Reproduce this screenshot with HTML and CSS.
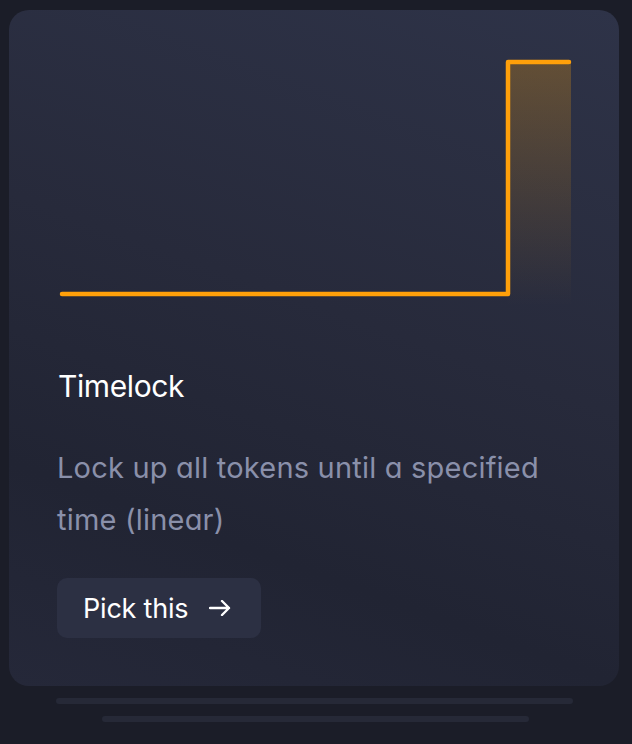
FILE: index.html
```html
<!DOCTYPE html>
<html>
<head>
<meta charset="utf-8">
<link rel="stylesheet" href="styles.css">
</head>
<body>
<div class="stack">
  <div class="card">
    <svg class="chart" width="514" height="250" viewBox="0 0 514 250">
      <defs>
        <linearGradient id="fillg" x1="0" y1="0" x2="0" y2="1">
          <stop offset="0" stop-color="#f59e0b" stop-opacity="0.27"/>
          <stop offset="1" stop-color="#f59e0b" stop-opacity="0"/>
        </linearGradient>
      </defs>
      <rect x="449" y="4" width="63" height="244" fill="url(#fillg)"/>
      <polyline points="3,236 449,236 449,4 510,4" fill="none" stroke="#ffa00a" stroke-width="4.5" stroke-linecap="round" stroke-linejoin="round"/>
    </svg>
    <h2 class="title">Timelock</h2>
    <p class="desc">Lock up all tokens until a specified time (linear)</p>
    <button class="pick">Pick this
      <svg class="arrow" width="22" height="16" viewBox="0 0 22 16"><path d="M1 8H20M13 1L20 8L13 15" fill="none" stroke="#fff" stroke-width="2.4" stroke-linecap="round" stroke-linejoin="round"/></svg>
    </button>
  </div>
  <div class="bar bar1"></div>
  <div class="bar bar2"></div>
</div>
</body>
</html>
```
FILE: styles.css
```css
html, body {
  margin: 0;
  padding: 0;
  background: #1b1d28;
  width: 632px;
  height: 744px;
  overflow: hidden;
}
body {
  font-family: Inter, "Noto Sans", sans-serif;
  font-feature-settings: "cv11" 1;
}
.stack {
  display: flex;
  flex-direction: column;
  align-items: center;
  padding-top: 10px;
}
.card {
  box-sizing: border-box;
  width: 610px;
  height: 676px;
  margin-left: -4px;
  border-radius: 20px;
  background: linear-gradient(200deg, #2e3348 0%, #272a3b 45%, #212433 75%, #252839 100%);
  padding: 48px 48px 0 48px;
  display: flex;
  flex-direction: column;
  align-items: flex-start;
}
.chart {
  display: block;
  margin-left: 2px;
}
.title {
  margin: 60px 0 0 1px;
  font-size: 30px;
  font-weight: 400;
  color: #ffffff;
  line-height: 36px;
  letter-spacing: -0.4px;
}
.desc {
  margin: 38px 0 0 0;
  font-size: 29px;
  line-height: 52px;
  color: #8a90aa;
  font-weight: 400;
  letter-spacing: 0.2px;
  max-width: 500px;
}
.pick {
  margin-top: 32px;
  height: 60px;
  width: 204px;
  box-sizing: border-box;
  border: none;
  border-radius: 10px;
  background: #2c3043;
  color: #fff;
  font-family: inherit;
  font-feature-settings: inherit;
  font-size: 27px;
  font-weight: 400;
  display: flex;
  align-items: center;
  padding: 0 0 0 26px;
  gap: 21px;
  letter-spacing: -0.2px;
}
.arrow { display: block; }
.bar {
  height: 6px;
  border-radius: 3px;
  background: #262937;
}
.bar1 { width: 517px; margin-top: 12px; margin-left: -3px; }
.bar2 { width: 427px; margin-top: 12px; margin-left: -2px; }
```
